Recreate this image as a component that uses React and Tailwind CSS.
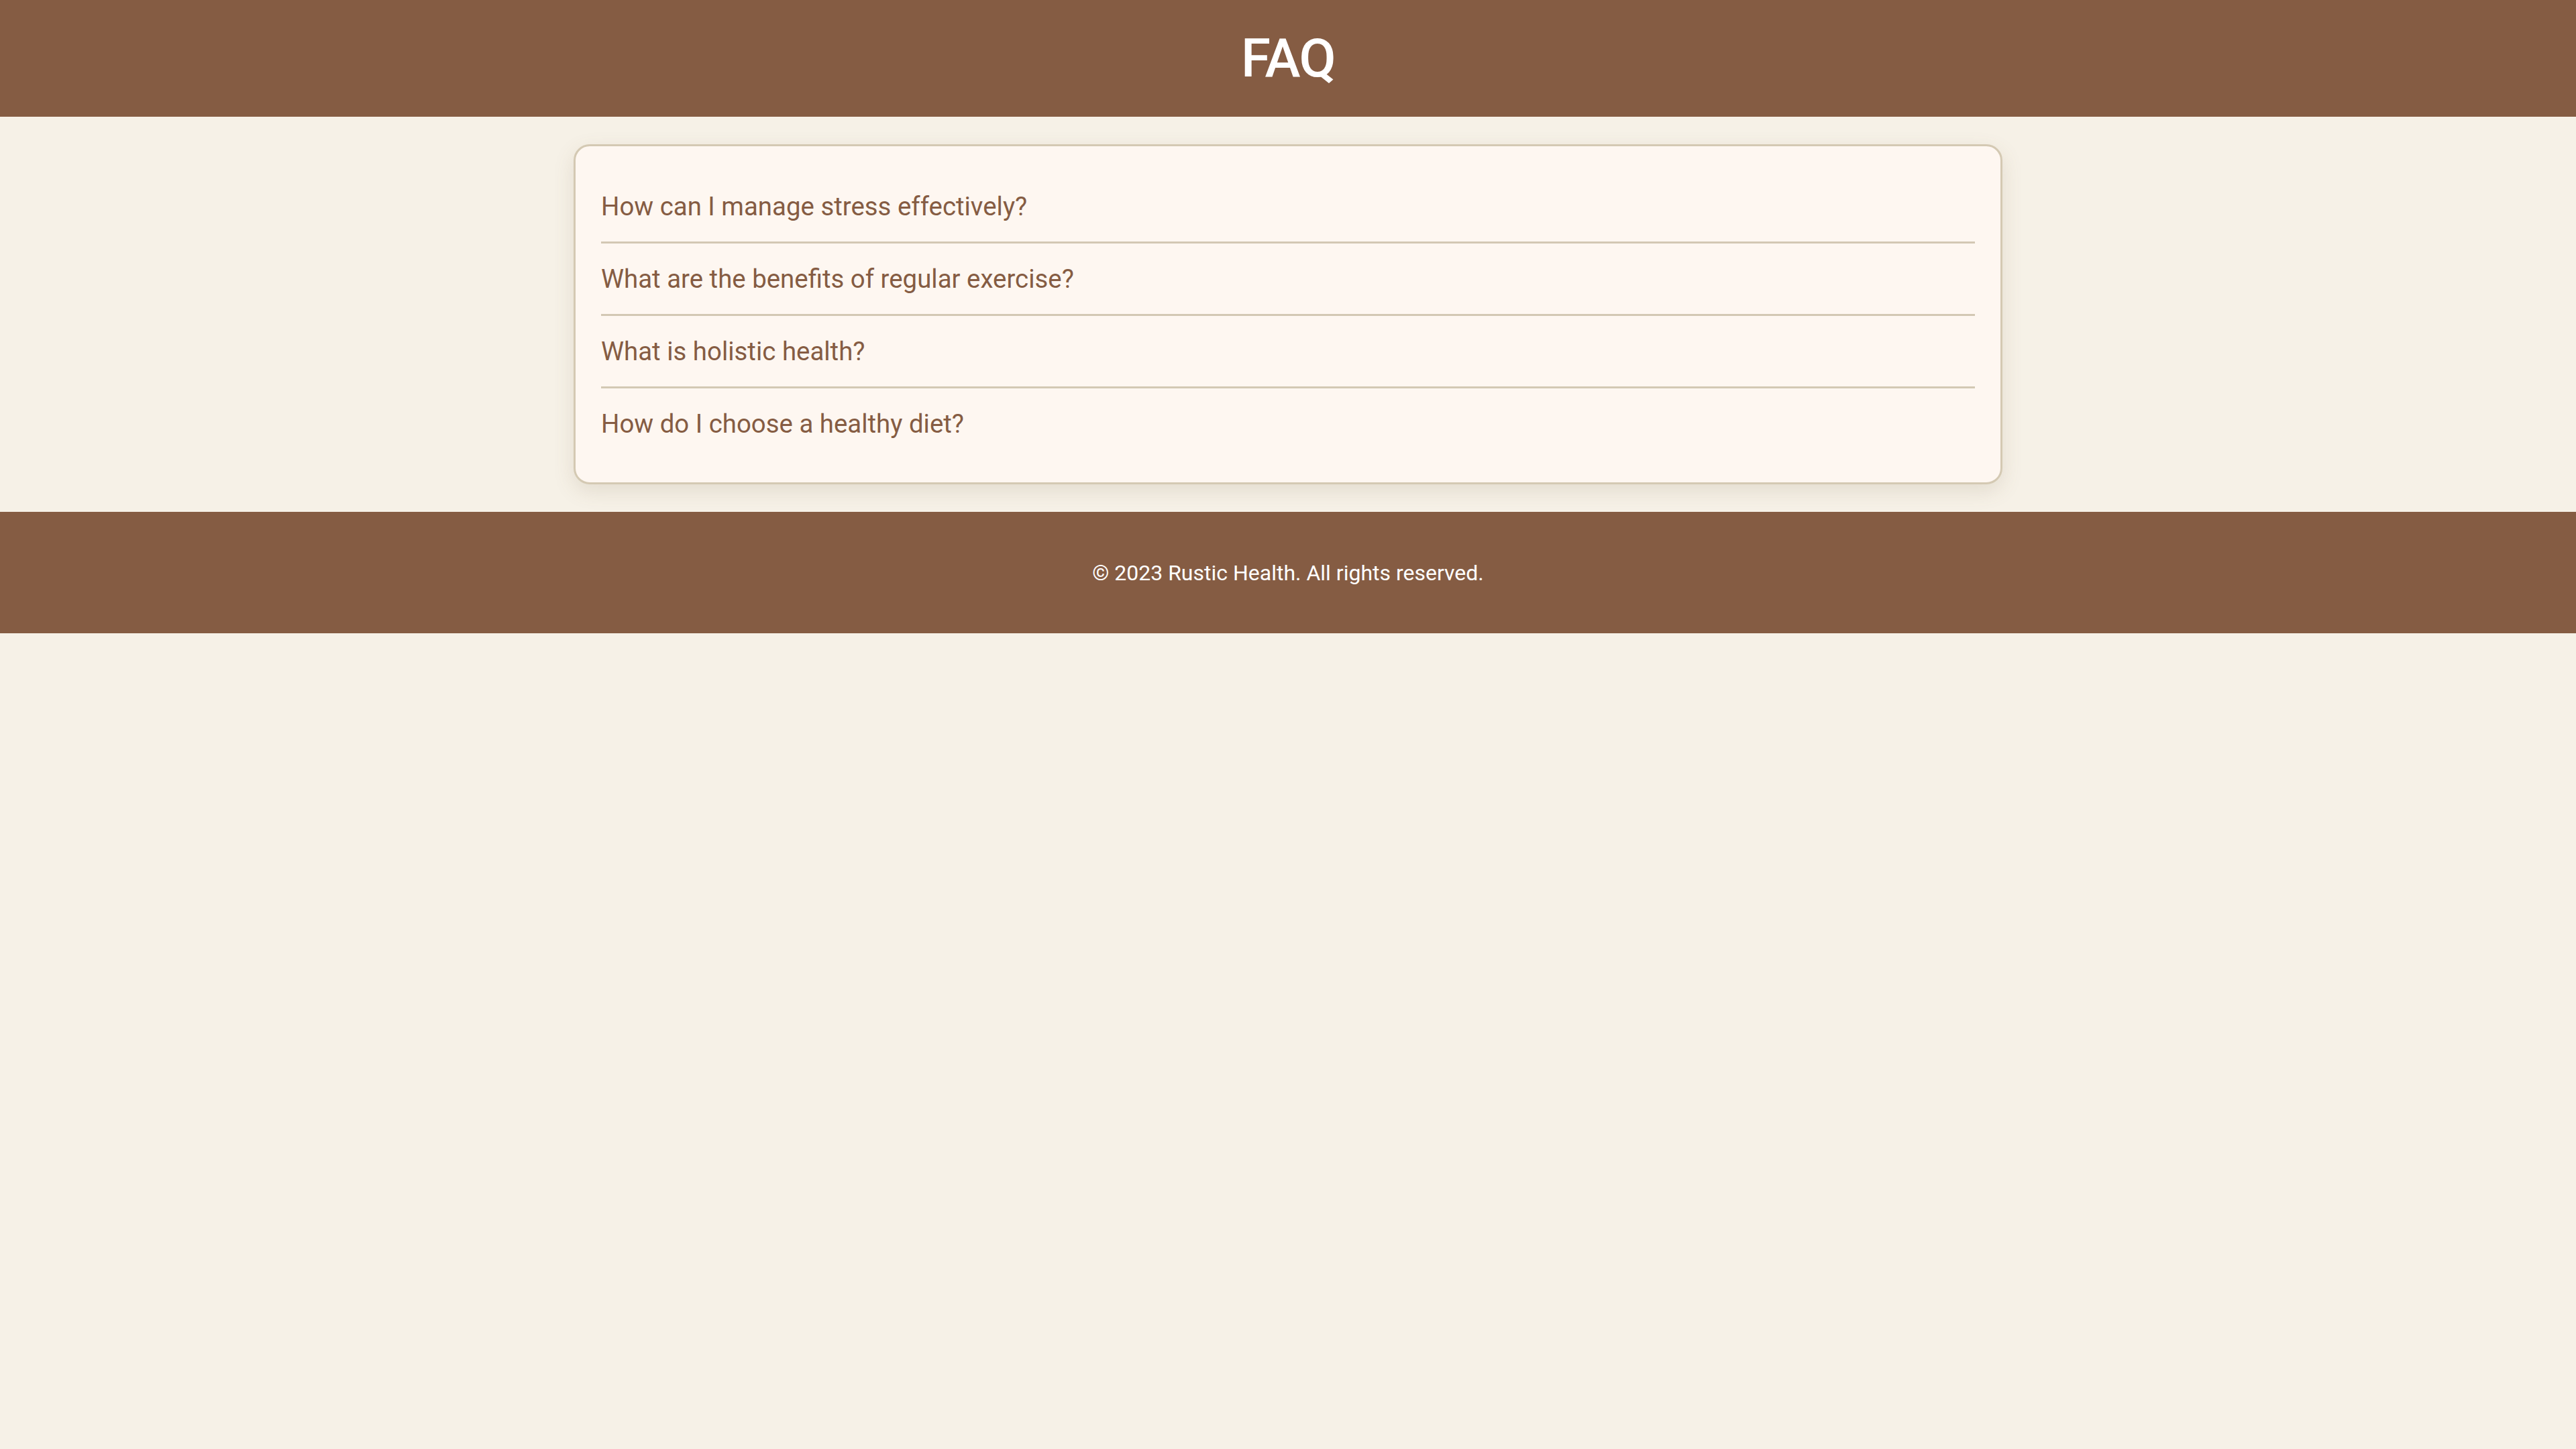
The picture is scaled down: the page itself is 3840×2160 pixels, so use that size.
export default function App() {
  const qs = [
    "How can I manage stress effectively?",
    "What are the benefits of regular exercise?",
    "What is holistic health?",
    "How do I choose a healthy diet?",
  ];
  return (
    <div className="min-h-screen bg-[#f6f1e7]" style={{ fontFamily: "Roboto, 'Liberation Sans', sans-serif" }}>
      <header className="h-[174px] bg-[#855c43] flex items-center justify-center">
        <h1 className="text-[80px] leading-none font-medium tracking-[-0.02em] text-white">FAQ</h1>
      </header>
      <main className="py-[41px]">
        <div className="mx-auto w-[2130px] bg-[#fef7f1] border-[3px] border-[#d4c9b3] rounded-[24px] shadow-[0_10px_30px_rgba(120,100,70,0.15)] px-[38px] pt-[37px] pb-[35px]">
          {qs.map((q, i) => (
            <div key={i} className={"py-[19px] " + (i < qs.length - 1 ? "border-b-[3px] border-[#d3c8b4]" : "")}>
              <p className="text-[38.4px] leading-[67px] text-[#855c43]">{q}</p>
            </div>
          ))}
        </div>
      </main>
      <footer className="h-[181px] bg-[#855c43] flex items-center justify-center">
        <p className="text-[32px] leading-[48px] text-white">© 2023 Rustic Health. All rights reserved.</p>
      </footer>
    </div>
  );
}
